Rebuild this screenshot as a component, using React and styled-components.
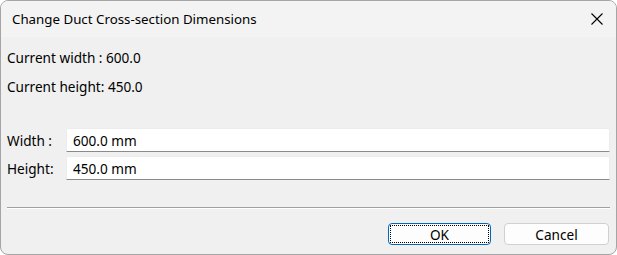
import styled, { createGlobalStyle } from "styled-components";

const GlobalStyle = createGlobalStyle`
  html, body {
    margin: 0;
    padding: 0;
    background: #ffffff;
  }
`;

const Window = styled.div`
  width: 617px;
  height: 255px;
  box-sizing: border-box;
  border: 1px solid #a5a5a5;
  border-radius: 8px;
  overflow: hidden;
  background: #f0f0f0;
  font-family: "Noto Sans", "Open Sans", sans-serif;
  font-size: 13.6px;
  color: #000;
  display: flex;
  flex-direction: column;
`;

const TitleBar = styled.div`
  height: 36px;
  background: #f3f3f3;
  display: flex;
  align-items: center;
  justify-content: space-between;
  padding: 0 12px 0 11px;
`;

const Title = styled.span`
  font-size: 13.3px;
  padding-bottom: 1px;
`;

const CloseButton = styled.button`
  border: none;
  background: transparent;
  padding: 0;
  width: 14px;
  height: 14px;
  display: flex;
  align-items: center;
  justify-content: center;
  cursor: pointer;
`;

const Body = styled.div`
  flex: 1;
  display: flex;
  flex-direction: column;
  padding: 12px 6px 0 6px;
`;

const InfoLine = styled.div`
  height: 17px;
  line-height: 17px;
  margin-bottom: ${(p) => p.$gap}px;
`;

const FieldRow = styled.div`
  display: grid;
  grid-template-columns: 59px 1fr;
  align-items: center;
  height: 24px;
  margin-bottom: 4px;
`;

const Label = styled.label``;

const Input = styled.input`
  height: 24px;
  box-sizing: border-box;
  border: 1px solid #ececec;
  border-bottom: 1px solid #8a8a8a;
  border-radius: 2px 2px 0 0;
  background: #fff;
  font: inherit;
  padding: 0 6px;
  color: #000;
  outline: none;
`;

const Separator = styled.hr`
  border: none;
  border-top: 1px solid #a0a0a0;
  border-bottom: 1px solid #ffffff;
  margin: 23px 0 0 0;
`;

const Buttons = styled.div`
  display: flex;
  justify-content: flex-end;
  gap: 13px;
  margin-top: 14px;
  padding-right: 1px;
`;

const Button = styled.button`
  width: ${(p) => (p.$primary ? 103 : 105)}px;
  height: 22px;
  box-sizing: border-box;
  border-radius: 4px;
  border: 1px solid ${(p) => (p.$primary ? "#0067c0" : "#d0d0d0")};
  background: #fdfdfd;
  font: inherit;
  color: #000;
  padding: 0;
  position: relative;
  cursor: pointer;

  ${(p) =>
    p.$primary &&
    `
    &::after {
      content: "";
      position: absolute;
      inset: 1px;
      border: 1px dotted #000;
      border-radius: 1px;
    }
  `}
`;

export default function App() {
  return (
    <>
      <GlobalStyle />
      <Window>
        <TitleBar>
          <Title>Change Duct Cross-section Dimensions</Title>
          <CloseButton aria-label="Close">
            <svg width="12" height="12" viewBox="0 0 12 12">
              <path d="M0.5 0.5 L11.5 11.5 M11.5 0.5 L0.5 11.5" stroke="#000" strokeWidth="1.1" />
            </svg>
          </CloseButton>
        </TitleBar>
        <Body>
          <InfoLine $gap={12}>Current width : 600.0</InfoLine>
          <InfoLine $gap={33}>Current height: 450.0</InfoLine>
          <FieldRow>
            <Label htmlFor="w">Width :</Label>
            <Input id="w" defaultValue="600.0 mm" />
          </FieldRow>
          <FieldRow>
            <Label htmlFor="h">Height:</Label>
            <Input id="h" defaultValue="450.0 mm" />
          </FieldRow>
          <Separator />
          <Buttons>
            <Button $primary>OK</Button>
            <Button>Cancel</Button>
          </Buttons>
        </Body>
      </Window>
    </>
  );
}
